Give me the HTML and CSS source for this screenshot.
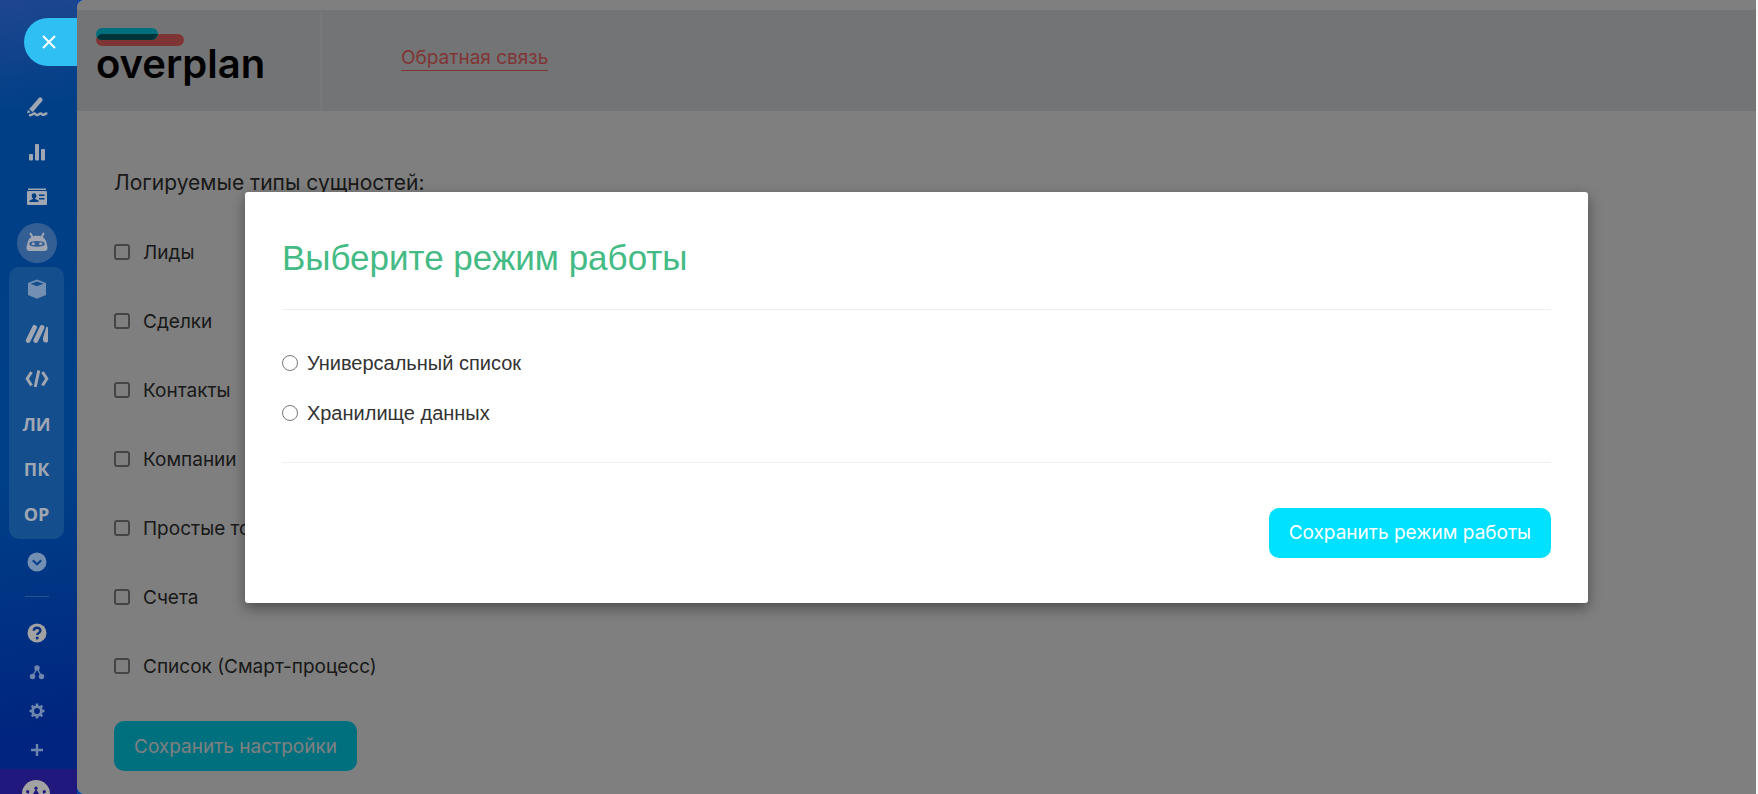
FILE: index.html
```html
<!DOCTYPE html>
<html lang="ru">
<head>
<meta charset="utf-8">
<meta name="viewport" content="width=device-width, initial-scale=1">
<title>overplan</title>
<link rel="stylesheet" href="styles.css">
</head>
<body>
<aside class="sidebar">
  <button class="close" type="button" aria-label="Закрыть"><svg width="14" height="14" viewBox="0 0 14 14"><path d="M1 1l12 12M13 1L1 13" fill="none" stroke="#fff" stroke-width="2"/></svg></button>
  <nav class="menu">
    <a class="item" href="#" aria-label="Подпись"><svg width="22" height="22" viewBox="0 0 22 22"><path d="M14.300 3.800 7 12.200" stroke="currentColor" stroke-width="4.600" stroke-linecap="round"/><path d="m4.600 11.200 3.800 3.500-2 1.200-3.300-3z"/><path d="m2 13.800 2.800 2.500-3.800 1z"/><path d="M4 19.200c2.300.2 2.600-1.700 4.400-1.600 1.600.1 1 1.600 2.800 1.500 1.700-.1 1.700-1.500 3.500-1.500 1.600 0 1 1.300 2.500 1.200 1.500 0 1.800-1 3.100-1.300" fill="none" stroke="currentColor" stroke-width="2.500" stroke-linecap="round"/></svg></a>
    <a class="item" href="#" aria-label="Аналитика"><svg width="22" height="22" viewBox="0 0 22 22"><rect x="3" y="13" width="4" height="6.500" rx="1"/><rect x="9" y="3" width="4" height="16.500" rx="1"/><rect x="15" y="8" width="4" height="11.500" rx="1"/></svg></a>
    <a class="item" href="#" aria-label="Контакты"><svg width="22" height="22" viewBox="0 0 22 22"><rect x="2" y="2.500" width="18" height="1.500"/><path fill-rule="evenodd" d="M2 5h18a1 1 0 0 1 1 1v12a1 1 0 0 1-1 1H2a1 1 0 0 1-1-1V6a1 1 0 0 1 1-1zm6 2.200c-1.600 0-2.300 1.200-2.300 2.600 0 1.100.5 2 1.200 2.500v.8L3.500 14.500V16h9v-1.500l-3.300-1.400v-.8c.7-.5 1.200-1.400 1.200-2.500C10.300 8.400 9.600 7.200 8 7.200zM13 8.500v1.600h5.500V8.500zm0 3.500v1.600h5.500V12z"/></svg></a>
    <a class="item robot" href="#" aria-label="Роботы"><svg width="24" height="24" viewBox="0 0 24 24"><path d="M5.500 3.500 8 8M18.500 3.500 16 8" stroke="currentColor" stroke-width="2" stroke-linecap="round"/><path fill-rule="evenodd" d="M12 5.800c5 0 8.500 2.500 9.500 7 .3 1.300.8 3 1 4.500.3 2.500-.8 3.700-3 3.700h-15c-2.200 0-3.300-1.200-3-3.700.2-1.500.7-3.200 1-4.500 1-4.500 4.500-7 9.500-7zM6.500 11.400c-3 .8-3 4 0 4.700 3.500.7 7.500.7 11 0 3-.7 3-3.900 0-4.700-3.500-.7-7.500-.7-11 0z"/><ellipse cx="8.300" cy="13.700" rx="1.700" ry="1.200"/><ellipse cx="15.700" cy="13.700" rx="1.700" ry="1.200"/></svg></a>
    <div class="group">
      <a class="item soft" href="#" aria-label="Маркет"><svg width="22" height="22" viewBox="0 0 22 22"><path fill-rule="evenodd" d="M11 1.500 20 5v12l-9 3.800L2 17V5zM4.500 5.800 11 8.300l6.500-2.500L11 3.400z"/></svg></a>
      <a class="item" href="#" aria-label="Решения"><svg width="24" height="20" viewBox="0 0 24 20"><path d="M3.200 16.500 9.500 3.500M10.800 16.500 17 3.500" stroke="currentColor" stroke-width="4.800" stroke-linecap="round"/><path d="M21.500 2.500c1.100 0 1.500.8 1.500 2V17c0 2-3.800 2-4.700 0-.7-2-.3-3.500.2-5z"/></svg></a>
      <a class="item" href="#" aria-label="Разработчикам"><svg width="24" height="20" viewBox="0 0 24 20"><path d="M6.500 3 2.200 9.700 6.500 16.500M17.500 3l4.300 6.700-4.300 6.800M13.800 1.500 10.200 18" fill="none" stroke="currentColor" stroke-width="3"/></svg></a>
      <a class="item" href="#">ЛИ</a>
      <a class="item" href="#">ПК</a>
      <a class="item" href="#">ОР</a>
    </div>
    <a class="item more" href="#" aria-label="Ещё"><svg width="20" height="20" viewBox="0 0 20 20"><circle cx="10" cy="10" r="9.500"/><path d="M5.800 8.300 10 12.300l4.200-4" fill="none" stroke="#07408a" stroke-width="2"/></svg></a>
  </nav>
  <hr class="split">
  <nav class="tools">
    <a class="tool bright" href="#" aria-label="Помощь"><svg width="20" height="20" viewBox="0 0 20 20"><circle cx="10" cy="10" r="9.500"/><path d="M6.800 7.800c0-4 6.600-3.900 6.600-.2 0 2.400-3.200 2.300-3.200 4.400" fill="none" stroke="#07307f" stroke-width="2.400"/><circle cx="10.200" cy="15" r="1.500" fill="#07307f"/></svg></a>
    <a class="tool" href="#" aria-label="Структура"><svg width="16" height="16" viewBox="0 0 16 16"><circle cx="8" cy="4" r="2.700"/><circle cx="3.500" cy="12.500" r="2.700"/><circle cx="12.500" cy="12.500" r="2.700"/><path d="M3.500 12.500 8 4l4.500 8.500" fill="none" stroke="currentColor" stroke-width="1.400"/></svg></a>
    <a class="tool" href="#" aria-label="Настройки"><svg width="16" height="16" viewBox="0 0 16 16"><circle cx="8" cy="8" r="4.400" fill="none" stroke="currentColor" stroke-width="2.900"/><path d="M8 .5v3M8 12.500v3M.5 8h3M12.500 8h3M2.700 2.700l2 2M11.300 11.300l2 2M2.700 13.300l2-2M11.300 4.700l2-2" stroke="currentColor" stroke-width="2.600"/></svg></a>
    <a class="tool" href="#" aria-label="Добавить"><svg width="14" height="14" viewBox="0 0 14 14"><path d="M7 1v12M1 7h12" stroke="currentColor" stroke-width="2.400"/></svg></a>
  </nav>
  <a class="crown" href="#" aria-label="Тариф"><svg width="28" height="28" viewBox="0 0 28 28"><circle cx="14" cy="14" r="14"/><path d="m6 13 4 2.500L14 9l4 6.500 4-2.500-2 8H8z" fill="#20187c"/><circle cx="14" cy="8.200" r="1.600" fill="#20187c"/><circle cx="5.700" cy="11.700" r="1.600" fill="#20187c"/><circle cx="22.300" cy="11.700" r="1.600" fill="#20187c"/></svg></a>
</aside>

<main class="page">
  <header class="header">
    <a class="logo" href="#">
      <svg width="88" height="18" viewBox="0 0 88 18"><rect y="6" width="88" height="12" rx="6" fill="#ff6b69"/><rect width="62" height="12" rx="6" fill="#00dffb"/><path d="M1 9.500A6 6 0 0 1 6 6h55.500A6 6 0 0 1 56 12H6A6 6 0 0 1 1 9.500z" fill="#006973"/></svg>
      <span class="wordmark">overplan</span>
    </a>
    <a class="feedback" href="#">Обратная связь</a>
  </header>
  <form class="settings">
    <h1 class="caption">Логируемые типы сущностей:</h1>
    <label class="check"><input type="checkbox">Лиды</label>
    <label class="check"><input type="checkbox">Сделки</label>
    <label class="check"><input type="checkbox">Контакты</label>
    <label class="check"><input type="checkbox">Компании</label>
    <label class="check"><input type="checkbox">Простые товары</label>
    <label class="check"><input type="checkbox">Счета</label>
    <label class="check"><input type="checkbox">Список (Смарт-процесс)</label>
    <button class="button" type="button">Сохранить настройки</button>
  </form>
  <div class="overlay">
    <section class="modal" role="dialog" aria-labelledby="mode-title">
      <h2 class="modal-title" id="mode-title">Выберите режим работы</h2>
      <div class="modal-body">
        <label class="radio"><input type="radio" name="mode">Универсальный список</label>
        <label class="radio"><input type="radio" name="mode">Хранилище данных</label>
      </div>
      <div class="modal-actions"><button class="button" type="button">Сохранить режим работы</button></div>
    </section>
  </div>
</main>
</body>
</html>
```
FILE: styles.css
```css
* { box-sizing: border-box; }

body {
  margin: 0;
  height: 100vh;
  display: flex;
  overflow: hidden;
  background: #0c45a0;
  font-family: Inter, "Noto Sans", sans-serif;
  font-size: 19px;
  color: #333;
}

a { color: inherit; text-decoration: none; }
svg { display: block; fill: currentColor; }

.sidebar {
  flex: none;
  width: 77px;
  display: flex;
  flex-direction: column;
  align-items: center;
  padding-top: 18px;
  overflow: hidden;
  background: linear-gradient(170deg, #1f4690 0, #003f86 14%, #004088 60%, #00247f 92%);
  color: #a0a7b3;
}

.close {
  align-self: flex-end;
  flex: none;
  width: 53px;
  height: 48px;
  padding: 0 0 0 18px;
  border: 0;
  border-radius: 24px 0 0 24px;
  background: #2fbff3;
}

.menu {
  display: flex;
  flex-direction: column;
  align-items: center;
  padding: 19px 4px 0 0;
}

.item {
  height: 45px;
  display: flex;
  align-items: center;
  justify-content: center;
  font-family: "Open Sans", sans-serif;
  font-size: 18px;
  font-weight: 700;
  line-height: 22px;
  padding-bottom: 2px;
}

.robot {
  width: 40px;
  height: 40px;
  margin: 3px 0;
  border-radius: 50%;
  background: #335f95;
}

.group {
  width: 55px;
  margin-top: 1px;
  padding-bottom: 2px;
  border-radius: 10px;
  background: #144e8d;
}

.soft, .more { color: #738fb2; }

.more { padding-bottom: 0; }

.split {
  width: 24px;
  margin: 12px 4px 16px 0;
  border: 0;
  border-top: 1px solid #23538f;
}

.tools {
  display: flex;
  flex-direction: column;
  align-items: center;
  padding-right: 3px;
}

.tool {
  height: 39px;
  display: flex;
  align-items: center;
  color: #6f86ad;
}

.bright { color: #a2a2a2; }

.crown {
  width: 100%;
  flex: 1;
  padding: 11px 0 0 22px;
  background: #20187c;
  color: #a2a2a2;
}

.page {
  position: relative;
  flex: 1;
  min-width: 0;
  padding-top: 10px;
  overflow: hidden;
  border-right: 2px solid #f8f8f8;
  border-radius: 8px 0 0 8px;
  background: #fff;
}

.header {
  display: flex;
  height: 101px;
  background: #e6e8ec;
}

.logo {
  width: 245px;
  padding: 18px 0 0 19px;
  border-right: 2px solid #f0f1f3;
  color: #000;
}

.wordmark {
  display: block;
  margin-top: -6px;
  font-size: 40px;
  font-weight: 600;
  line-height: 48px;
}

.feedback {
  align-self: flex-start;
  margin: 36px 0 0 79px;
  border-bottom: 1px solid #ff6b69;
  line-height: 24px;
  color: #ff6b69;
}

.settings {
  display: flex;
  flex-direction: column;
  align-items: flex-start;
  padding: 56px 37px 0;
}

.caption {
  margin: 0 0 39px;
  font-size: 21px;
  font-weight: 400;
  line-height: 32px;
}

.check {
  display: flex;
  align-items: center;
  height: 29px;
  margin-bottom: 40px;
}

.check input {
  appearance: none;
  width: 16px;
  height: 16px;
  margin: 0 13px 2px 0;
  border: 2px solid #8a8a8a;
  border-radius: 3px;
}

.button {
  height: 50px;
  padding: 0 20px;
  border: 0;
  border-radius: 10px;
  background: #00e1ff;
  color: #fff;
  font: inherit;
}

.overlay {
  position: absolute;
  inset: 0;
  display: flex;
  align-items: center;
  justify-content: center;
  background: rgba(0, 0, 0, .5);
}

.modal {
  width: 80%;
  padding: 37px;
  border-radius: 3px;
  background: #fff;
  box-shadow: 0 5px 14px rgba(0, 0, 0, .4);
  font-family: "Liberation Sans", Arial, sans-serif;
}

.modal-title {
  margin: 0;
  padding: 9px 0 31px;
  font-size: 35px;
  font-weight: 400;
  line-height: 40px;
  color: #44bb85;
}

.modal-body {
  padding: 29px 0 23px;
  border: solid #edf0f2;
  border-width: 1px 0;
}

.radio {
  display: flex;
  align-items: center;
  height: 50px;
  font-size: 20px;
}

.radio input {
  width: 16px;
  height: 16px;
  margin: 0 9px 2px 0;
}

.modal-actions {
  display: flex;
  justify-content: flex-end;
  padding: 45px 0 8px;
  font-family: Inter, sans-serif;
}
```
